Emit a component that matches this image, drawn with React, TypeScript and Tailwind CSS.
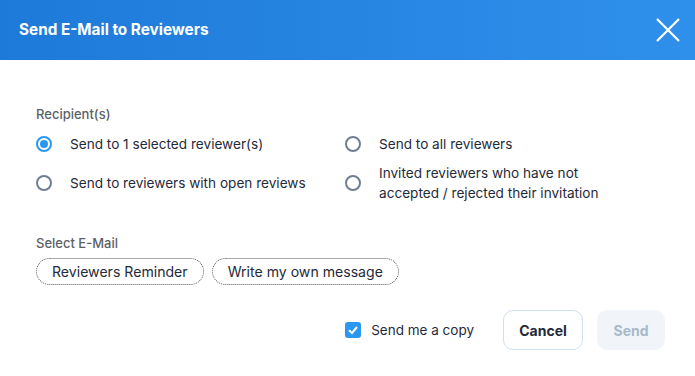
import React from 'react';

const font = { fontFamily: 'Inter, "Noto Sans", sans-serif' };

const Radio: React.FC<{ checked?: boolean }> = ({ checked }) => (
  <span
    className={
      'flex h-4 w-4 shrink-0 items-center justify-center rounded-full border-2 ' +
      (checked ? 'border-[#2b97ef]' : 'border-[#6f7f92]')
    }
  >
    {checked && <span className="h-2 w-2 rounded-full bg-[#2b97ef]" />}
  </span>
);

const Option: React.FC<{ checked?: boolean; children: React.ReactNode }> = ({ checked, children }) => (
  <label className="flex items-center gap-[18px] text-[13.6px] leading-5 text-[#1f2a3a]">
    <Radio checked={checked} />
    <span>{children}</span>
  </label>
);

export default function App() {
  return (
    <div className="h-[376px] w-[695px] overflow-hidden bg-white" style={font}>
      <div className="flex h-[60px] items-center justify-between bg-gradient-to-r from-[#1e7ad8] to-[#2f90ec] pl-[19px] pr-[14px]">
        <h1 className="text-[15.3px] font-bold text-white">Send E-Mail to Reviewers</h1>
        <svg width="26" height="26" viewBox="0 0 26 26" fill="none" stroke="white" strokeWidth="2.2">
          <path d="M2 2 L24 24 M24 2 L2 24" />
        </svg>
      </div>

      <div className="px-[36px] pt-[44px]">
        <p className="text-[13px] font-medium leading-5 text-[#5c5f66]">Recipient(s)</p>
        <div className="mt-[10px] grid grid-cols-[309px_1fr] items-center gap-y-[9px]">
          <Option checked>Send to 1 selected reviewer(s)</Option>
          <Option>Send to all reviewers</Option>
          <Option>Send to reviewers with open reviews</Option>
          <Option>
            Invited reviewers who have not
            <br />
            accepted / rejected their invitation
          </Option>
        </div>

        <p className="mt-[30px] text-[13px] font-medium leading-5 text-[#5c5f66]">Select E-Mail</p>
        <div className="mt-[5px] flex gap-2">
          <button className="h-[27px] rounded-full border border-dotted border-[#555] px-[15px] text-[14.1px] text-[#1f2a3a]">
            Reviewers Reminder
          </button>
          <button className="h-[27px] rounded-full border border-dotted border-[#555] px-[15px] text-[14.1px] text-[#1f2a3a]">
            Write my own message
          </button>
        </div>

        <div className="mt-[25px] flex items-center justify-end">
          <label className="flex items-center gap-[10px] text-[13.5px] text-[#1f2a3a]">
            <span className="flex h-4 w-4 items-center justify-center rounded-[3px] bg-[#2b97ef]">
              <svg width="12" height="12" viewBox="0 0 12 12" fill="none" stroke="white" strokeWidth="2">
                <path d="M2 6.2 L5 9 L10 3" />
              </svg>
            </span>
            Send me a copy
          </label>
          <button className="ml-[29px] h-10 w-20 rounded-[10px] border border-[#cfe0f2] bg-white text-[14px] font-bold text-[#1f2a3a]">
            Cancel
          </button>
          <button className="ml-[14px] mr-[-6px] h-10 w-[68px] rounded-[10px] bg-[#f1f5fa] text-[14px] font-bold text-[#a8b8c8]">
            Send
          </button>
        </div>
      </div>
    </div>
  );
}
